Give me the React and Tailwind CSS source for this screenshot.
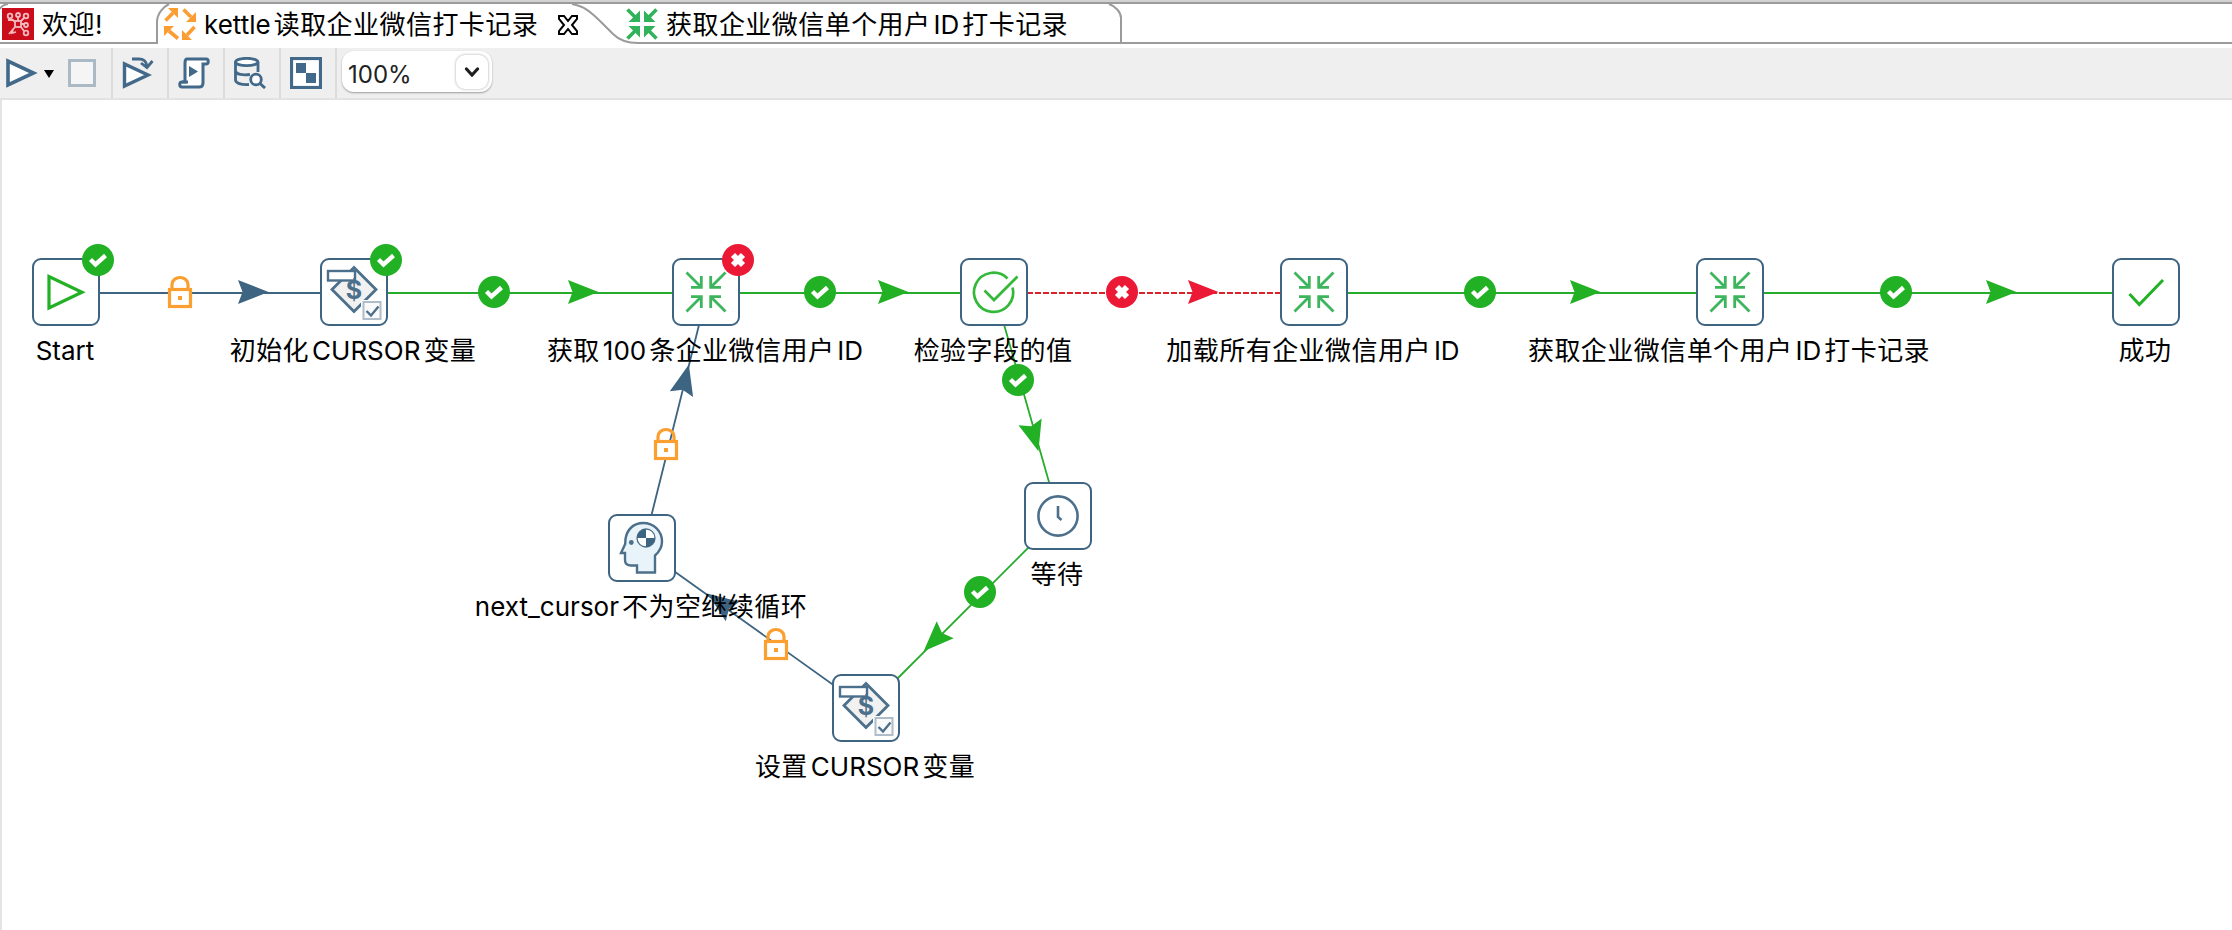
import React from 'react';

const BLUE = '#3d6480';
const GREEN = '#22b024';
const RED = '#eb1935';

const NODES = {
  start: { x: 32, y: 158, label: 'Start', icon: 'start', status: 'ok' },
  init: { x: 320, y: 158, label: '初始化CURSOR变量', icon: 'variable', status: 'ok' },
  fetch: { x: 672, y: 158, label: '获取100条企业微信用户ID', icon: 'trans', status: 'error' },
  check: { x: 960, y: 158, label: '检验字段的值', icon: 'evaluate' },
  load: { x: 1280, y: 158, label: '加载所有企业微信用户ID', icon: 'trans' },
  single: { x: 1696, y: 158, label: '获取企业微信单个用户ID打卡记录', icon: 'trans' },
  success: { x: 2112, y: 158, label: '成功', icon: 'success' },
  wait: { x: 1024, y: 382, label: '等待', icon: 'clock' },
  next: { x: 608, y: 414, label: 'next_cursor不为空继续循环', icon: 'head' },
  set: { x: 832, y: 574, label: '设置CURSOR变量', icon: 'variable' },
};

const HOPS = [
  { from: 'start', to: 'init', type: 'lock', badge: [180, 192], arrow: [253, 192] },
  { from: 'init', to: 'fetch', type: 'ok', badge: [494, 192], arrow: [583, 192] },
  { from: 'fetch', to: 'check', type: 'ok', badge: [820, 192], arrow: [893, 192] },
  { from: 'check', to: 'load', type: 'error', badge: [1122, 192], arrow: [1203, 192] },
  { from: 'load', to: 'single', type: 'ok', badge: [1480, 192], arrow: [1585, 192] },
  { from: 'single', to: 'success', type: 'ok', badge: [1896, 192], arrow: [2001, 192] },
  { from: 'check', to: 'wait', type: 'ok', badge: [1018, 280], arrow: [1034.2, 336.3] },
  { from: 'wait', to: 'set', type: 'ok', badge: [980, 492], arrow: [934.6, 540.4] },
  { from: 'set', to: 'next', type: 'lock', badge: [776, 544], arrow: [720.5, 502.7] },
  { from: 'next', to: 'fetch', type: 'lock', badge: [666, 344], arrow: [685.1, 279.6] },
];

const HOP_COLORS = { lock: BLUE, ok: '#27ab2b', error: '#d8232b' };
const ARROW_COLORS = { lock: BLUE, ok: GREEN, error: RED };

// latin runs get a little air on the sides that touch chinese text
const MixedText = ({ text }) => {
  const parts = text.split(/([A-Za-z0-9_]+)/).filter(Boolean);
  return (
    <span className="inline-flex whitespace-pre">
      {parts.map((part, i) => {
        if (!/^[A-Za-z0-9_]+$/.test(part)) {
          return <span key={i} className="tracking-[0.45px]">{part}</span>;
        }
        return (
          <span key={i} className={`${i > 0 ? 'pl-[3px]' : ''} ${i < parts.length - 1 ? 'pr-[3px]' : ''}`}>
            {part}
          </span>
        );
      })}
    </span>
  );
};

const Badge = ({ type }) => {
  if (type === 'lock') {
    return (
      <g fill="none" stroke="#fb9f30">
        <path d="M-8 -4V-7.5A8 7 0 0 1 8 -7.5V-4" strokeWidth="3.2" />
        <rect x="-10.5" y="-2.5" width="21" height="17" fill="#fff" strokeWidth="3.2" />
        <rect x="-2" y="4" width="4" height="4" fill="#fb9f30" stroke="none" />
      </g>
    );
  }
  return (
    <g>
      <circle r="16" fill={type === 'ok' ? GREEN : RED} />
      {type === 'ok' ? (
        <path d="M-7.5 -0.5L-2.5 4.5L7.5 -4.5" fill="none" stroke="#fff" strokeWidth="4.4" />
      ) : (
        <path d="M-5 -5L5 5M5 -5L-5 5" fill="none" stroke="#fff" strokeWidth="5.8" />
      )}
    </g>
  );
};

const Hop = ({ hop }) => {
  const a = NODES[hop.from];
  const b = NODES[hop.to];
  const flat = a.y === b.y;
  const angle = (Math.atan2(b.y - a.y, b.x - a.x) * 180) / Math.PI;
  return (
    <g>
      <line
        x1={a.x + 35}
        y1={a.y + 35}
        x2={b.x + 35}
        y2={b.y + 35}
        stroke={HOP_COLORS[hop.type]}
        strokeWidth={flat ? 2 : 1.8}
        strokeDasharray={hop.type === 'error' ? '6 2' : undefined}
      />
      <path
        transform={`translate(${hop.arrow[0]} ${hop.arrow[1]}) rotate(${angle})`}
        d="M15.5 0L-15 -12L-10.5 0L-15 12Z"
        fill={ARROW_COLORS[hop.type]}
      />
      <g transform={`translate(${hop.badge[0]} ${hop.badge[1]})`}>
        <Badge type={hop.type} />
      </g>
    </g>
  );
};

const NodeIcon = ({ name }) => {
  switch (name) {
    case 'start':
      return <path d="M17 18.5V50L50 34.2Z" stroke={GREEN} strokeWidth="3.2" />;
    case 'variable':
      return (
        <g stroke="#4c708c" strokeWidth="2.8">
          <path d="M34 9.5L56 31.5L34 53.5L12 31.5Z" fill="#f1f1f1" />
          <rect x="8" y="13" width="27" height="9.5" fill="#fff" strokeWidth="2.4" />
          <text x="34" y="41" textAnchor="middle" fontSize="25" fontWeight="700" fill="#4c708c" stroke="none">$</text>
          <rect x="41" y="42" width="22" height="22" fill="#fff" stroke="none" />
          <rect x="43.5" y="44" width="17" height="17" fill="#fafafa" stroke="#aebdc9" strokeWidth="2" />
          <path d="M46.5 53L51 57.5L58.5 48.5" strokeWidth="2.4" />
        </g>
      );
    case 'trans':
      return (
        <g stroke="#3cb55c" strokeWidth="2.8">
          <path d="M14.5 14.5L29 29M19 29.3H29.3V18" />
          <path d="M53.5 14.5L39 29M49 29.3H38.7V18" />
          <path d="M14.5 53.5L29 39M19 38.7H29.3V50" />
          <path d="M53.5 53.5L39 39M49 38.7H38.7V50" />
        </g>
      );
    case 'evaluate':
      return (
        <g stroke="#33b838" strokeWidth="2.7">
          <path d="M47.5 20.5A19.6 19.6 0 1 0 52.6 29.5" />
          <path d="M24.5 32.5L34 42L57.5 18.5" />
        </g>
      );
    case 'success':
      return <path d="M17.5 36L27.3 46.5L51 22" stroke={GREEN} strokeWidth="3" />;
    case 'clock':
      return (
        <g stroke="#4c708c" strokeWidth="2.6">
          <circle cx="34" cy="34" r="19.6" />
          <path d="M34 24V35L37.5 38" />
        </g>
      );
    case 'head':
      return (
        <g stroke="#4c708c" strokeWidth="2.4">
          <path
            d="M17.5 25C19 15 26 9 35 9C46 9 54 17 54 27.5C54 34 51 38 47 41.5V58.5H29V51.5H23C19 51.5 17 49.5 17 46V39H13L17.2 30Z"
            fill="#e9f3fa"
          />
          <circle cx="23.3" cy="28.5" r="2.4" fill="#4c708c" stroke="none" />
          <circle cx="38" cy="24" r="9" fill="#fff" strokeWidth="1.3" />
          <path d="M38 24V15A9 9 0 0 0 29 24ZM38 24V33A9 9 0 0 0 47 24Z" fill={BLUE} stroke="none" />
        </g>
      );
    default:
      return null;
  }
};

const Node = ({ node }) => (
  <div className="absolute h-[68px] w-[68px]" style={{ left: node.x, top: node.y }}>
    <div className="h-full w-full rounded-[9px] border-2 border-[#3d6480] bg-white">
      <svg className="-m-[2px] h-[68px] w-[68px]" viewBox="0 0 68 68" fill="none">
        <NodeIcon name={node.icon} />
      </svg>
    </div>
    {node.status && (
      <svg className="absolute left-[50px] -top-[14px] h-8 w-8" viewBox="-16 -16 32 32">
        <Badge type={node.status} />
      </svg>
    )}
    <div className="absolute top-[75px] left-[33px] -translate-x-1/2 text-[26px] leading-9 text-black">
      <MixedText text={node.label} />
    </div>
  </div>
);

const Tabs = () => (
  <div className="relative flex h-12 bg-white text-[26px] leading-9 text-black">
    <svg className="absolute inset-0 h-12 w-full" viewBox="0 0 2232 48" fill="none" stroke="#9b9b9b" strokeWidth="2">
      <rect width="2232" height="2" fill="#d2d2d2" stroke="none" />
      <path d="M0 3H2232" />
      <path d="M0 9Q2 5 8 4" />
      <path d="M0 43H157V22C157 14 163 7 169 4" />
      <path d="M572 4C584 6 591 12 602 23L613 34C619 40 627 43 638 43H2232" />
      <path d="M1109 4C1115 6 1121 12 1121 18V43" />
    </svg>
    <div className="relative flex w-[162px] items-start pt-2 pl-0.5">
      <svg className="h-8 w-8" viewBox="0 0 32 32" fill="none" stroke="#f3b9bd" strokeWidth="1.8">
        <rect width="32" height="32" fill="#cb0d1b" stroke="none" />
        <rect x="13" y="13" width="6" height="6" />
        <circle cx="8" cy="8" r="2.3" />
        <circle cx="16" cy="7" r="2" />
        <circle cx="24" cy="8" r="2.3" />
        <circle cx="24" cy="17" r="2" />
        <circle cx="24" cy="25" r="2.3" />
        <path d="M6 12H11L13 14M16 9V13M22 10L19 13M19 16H22M22 23L19 19M13 19L7 26M11 21L10 25L14 24" />
      </svg>
      <span className="-mt-[1px] ml-2"><MixedText text="欢迎!" /></span>
    </div>
    <div className="relative flex w-[464px] items-start pt-2 pl-0.5">
      <svg className="h-8 w-8" viewBox="0 0 32 32" fill="#fb9d33" stroke="#fb9d33" strokeWidth="3.6">
        <path d="M1.5 12.500L9 5M19.500 1.500L27 9M14 30.500L5 23M30.500 19L23 27" />
        <path stroke="none" d="M4 0H14V10ZM32 4V14H22ZM0 28V18H10ZM28 32H18V22Z" />
      </svg>
      <span className="-mt-[1px] ml-2"><MixedText text="kettle读取企业微信打卡记录" /></span>
      <svg className="absolute top-[15px] left-[396px] h-5 w-5" viewBox="0 0 20 20" fill="#fff" stroke="#000" strokeWidth="2">
        <path d="M1 1H6L10 6L14 1H19V4L14 10L19 16V19H14L10 14L6 19H1V16L6 10L1 4Z" />
      </svg>
    </div>
    <div className="relative flex items-start pt-2">
      <svg className="h-8 w-8" viewBox="0 0 32 32" fill="#32b25a" stroke="#32b25a" strokeWidth="3.6">
        <path d="M1.500 1.500L9 9M30.500 1.500L23 9M1.500 30.500L9 23M30.500 30.500L23 23" />
        <path stroke="none" d="M14 2.500V14H2.500ZM18 2.500V14H29.500ZM14 29.500V18H2.500ZM18 29.500V18H29.500Z" />
      </svg>
      <span className="-mt-[1px] ml-2"><MixedText text="获取企业微信单个用户ID打卡记录" /></span>
    </div>
  </div>
);

const ToolButton = ({ children }) => (
  <div className="flex h-full w-14 border-r-2 border-[#dcdcdc] pt-[9px] pl-[9px]">
    <svg className="h-8 w-8" viewBox="0 0 32 32" fill="none" stroke="#42698a" strokeWidth="3">
      {children}
    </svg>
  </div>
);

const Toolbar = () => (
  <div className="flex h-[52px] border-b-2 border-[#e2e2e2] bg-[#efefef]">
    <div className="flex w-[113px] border-r-2 border-[#dcdcdc] pt-[9px] pl-1">
      <svg className="h-8 w-[34px]" viewBox="0 0 34 32" fill="#fff" stroke="#42698a" strokeWidth="3.600">
        <path d="M4 4V28L29.500 16Z" />
      </svg>
      <svg className="mt-[13px] ml-[6px] h-2 w-2.5" viewBox="0 0 10 8">
        <path d="M0 0H10L5 8Z" />
      </svg>
      <div className="mt-[2px] ml-[14px] h-7 w-7 border-3 border-[#aab9c4] bg-[#f5f5f5]" />
    </div>
    <ToolButton>
      <path d="M2.500 7V29L26 18Z" fill="#fff" strokeWidth="3.400" />
      <path d="M10 2H17C22 2 24 4 25 9M19 6L25 10.500L30.500 4" strokeWidth="2.800" />
    </ToolButton>
    <ToolButton>
      <path d="M9 2H28C31 2 31 7 28 7H25V26C25 29 23 30 21 30H4C1 30 1 25 4 25H7V6C7 3 8 2 9 2Z" fill="#fff" strokeWidth="3" />
      <path d="M4 25H10" strokeWidth="3" />
      <path d="M11 9V20L20 14.500Z" fill="#42698a" stroke="none" />
    </ToolButton>
    <ToolButton>
      <g strokeWidth="2.800">
        <path d="M1.500 5V23C1.500 26 7 28 15 27.500M24 5V15" />
        <ellipse cx="12.700" cy="5" rx="11.200" ry="3.700" fill="#fff" />
        <path d="M1.500 14C2 17.500 9 18.500 16 17.500" />
        <circle cx="22" cy="22.500" r="5.300" fill="#fff" />
        <path d="M26 26.500L31 31" strokeWidth="3" />
      </g>
    </ToolButton>
    <ToolButton>
      <rect x="1.500" y="1.500" width="29" height="29" fill="#fff" strokeWidth="3.200" />
      <rect x="6" y="6" width="10" height="10" fill="#42698a" stroke="none" />
      <rect x="16" y="16" width="10" height="10" fill="#42698a" stroke="none" />
    </ToolButton>
    <div className="mt-[3px] ml-[5px] flex h-[41px] w-[150px] items-center justify-between rounded-[12px] bg-white pr-[4px] pl-[6px] shadow-[0_1px_2px_rgba(0,0,0,0.35)]">
      <span className="pt-[7px] text-[24px] leading-8 text-[#222]">100%</span>
      <span className="flex h-[34px] w-8 items-center justify-center rounded-[9px] bg-white shadow-[0_0_3px_rgba(0,0,0,0.35)]">
        <svg className="h-2.5 w-4" viewBox="0 0 16 10" fill="none" stroke="#1f1f1f" strokeWidth="3.200" strokeLinecap="round">
          <path d="M2.500 2L8 8L13.500 2" />
        </svg>
      </span>
    </div>
  </div>
);

const Canvas = () => (
  <div className="relative h-[830px] overflow-hidden border-l-2 border-[#e4e4e4] bg-white">
    <div className="absolute top-0 -left-[2px] h-[830px] w-[2232px]">
      <svg className="absolute inset-0" width="2232" height="830" viewBox="0 0 2232 830">
        {HOPS.map((hop) => (
          <Hop key={`${hop.from}-${hop.to}`} hop={hop} />
        ))}
      </svg>
      {Object.keys(NODES).map((key) => (
        <Node key={key} node={NODES[key]} />
      ))}
    </div>
  </div>
);

const App = () => {
  return (
    <div className="h-[930px] w-[2232px] overflow-hidden bg-white font-['Inter','Noto_Sans_CJK_SC',sans-serif]">
      <Tabs />
      <Toolbar />
      <Canvas />
    </div>
  );
};

export default App;
